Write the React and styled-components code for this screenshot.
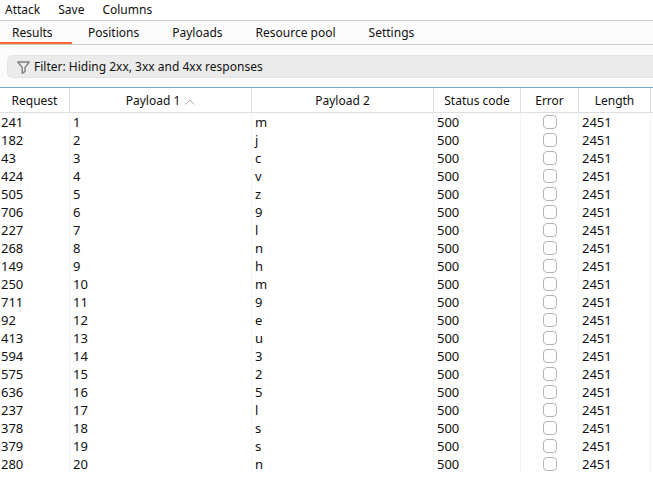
import React, { useState } from "react";
import styled, { createGlobalStyle } from "styled-components";

const GlobalStyle = createGlobalStyle`
  * { box-sizing: border-box; }
  body {
    margin: 0;
    background: #fff;
    color: #111;
    font: 12px/18px "Noto Sans", sans-serif;
  }
  button { font: inherit; color: inherit; border: 0; margin: 0; background: none; }
`;

const Window = styled.main`
  display: flex;
  flex-direction: column;
  overflow: hidden;
`;

const MenuBar = styled.nav`
  display: flex;
  align-items: flex-start;
  gap: 18px;
  height: 20px;
  padding: 1px 0 0 5px;
`;

const MenuButton = styled.button`
  padding: 0;
`;

const TabBar = styled.div`
  display: flex;
  height: 25px;
  background: #fbfbfb;
  border-top: 1px solid #c9cdcd;
  border-bottom: 1px solid #c9cdcd;
`;

const Tab = styled.button`
  padding: 2px 17px 0 16px;
  text-align: left;
  white-space: nowrap;
  border-bottom: 2px solid ${(p) => (p.$active ? "#ff6633" : "transparent")};

  &:first-child { min-width: 72px; padding-left: 12px; }
`;

const FilterPanel = styled.section`
  display: flex;
  padding: 10px 0 9px 7px;
  background: #fbfbfb;
`;

const FilterButton = styled.button`
  display: flex;
  flex: 1;
  align-items: center;
  gap: 4px;
  height: 23px;
  padding: 1px 9px 0;
  text-align: left;
  background: #ebebeb;
  border: 1px solid #e4e4e4;
  border-right: 0;
  border-radius: 6px 0 0 6px;
`;

const ResultsTable = styled.table`
  width: 100%;
  table-layout: fixed;
  border-collapse: separate;
  border-spacing: 0;
  border-top: 1px solid #7ba9d6;
`;

const Column = styled.col`
  width: ${(p) => (p.$width ? `${p.$width}px` : "auto")};
`;

const HeaderCell = styled.th`
  height: 25px;
  padding: 2px 0 0;
  font-weight: 400;
  white-space: nowrap;
  border-right: 1px solid #dedede;
  border-bottom: 1px solid #dedede;

  &:last-child { border-right: 0; }
`;

const SortArrow = styled.svg`
  margin-left: 5px;
`;

const Cell = styled.td`
  height: 18px;
  padding: 0 0 0 ${(p) => (p.$first ? "1px" : "3px")};
  font-size: 13px;
  white-space: nowrap;
  border-right: 1px solid #f4f4f4;

  &:last-child { border-right: 0; padding: 0; }
`;

const CheckWrap = styled.label`
  display: flex;
  justify-content: center;
`;

const Check = styled.input`
  appearance: none;
  width: 14px;
  height: 14px;
  margin: 0;
  background: #fff;
  border: 1px solid #b4b4b4;
  border-radius: 4px;

  &:checked { background: #ff6633; }
`;

const columns = [
  { name: "Request", width: 70 },
  { name: "Payload 1", sorted: true },
  { name: "Payload 2" },
  { name: "Status code", width: 87 },
  { name: "Error", width: 58 },
  { name: "Length", width: 72 },
];

const results = [
  [241, "m"], [182, "j"], [43, "c"], [424, "v"], [505, "z"],
  [706, "9"], [227, "l"], [268, "n"], [149, "h"], [250, "m"],
  [711, "9"], [92, "e"], [413, "u"], [594, "3"], [575, "2"],
  [636, "5"], [237, "l"], [378, "s"], [379, "s"], [280, "n"],
];

const tabs = ["Results", "Positions", "Payloads", "Resource pool", "Settings"];

export default function App() {
  const [active, setActive] = useState("Results");
  return (
    <Window>
      <GlobalStyle />
      <MenuBar>
        {["Attack", "Save", "Columns"].map((name) => (
          <MenuButton key={name} type="button">{name}</MenuButton>
        ))}
      </MenuBar>
      <TabBar role="tablist">
        {tabs.map((name) => (
          <Tab
            key={name}
            type="button"
            role="tab"
            aria-selected={active === name}
            $active={active === name}
            onClick={() => setActive(name)}
          >
            {name}
          </Tab>
        ))}
      </TabBar>
      <FilterPanel>
        <FilterButton type="button">
          <svg width="13" height="13" viewBox="0 0 13 13" fill="none" stroke="#808080" strokeWidth="1.4" strokeLinejoin="round" aria-hidden="true">
            <path d="M.8 1h11.4L8 6.6v4.1l-2.7 1.5V6.6z" />
          </svg>
          Filter: Hiding 2xx, 3xx and 4xx responses
        </FilterButton>
      </FilterPanel>
      <ResultsTable>
        <colgroup>
          {columns.map((c) => <Column key={c.name} $width={c.width} />)}
          <Column $width={2} />
        </colgroup>
        <thead>
          <tr>
            {columns.map((c) => (
              <HeaderCell key={c.name} scope="col" aria-sort={c.sorted ? "ascending" : undefined}>
                {c.name}
                {c.sorted && (
                  <SortArrow width="10" height="6" viewBox="0 0 10 6" fill="none" stroke="#aaa" aria-hidden="true">
                    <path d="M.5 5.5 5 1l4.5 4.5" />
                  </SortArrow>
                )}
              </HeaderCell>
            ))}
            <HeaderCell as="td" />
          </tr>
        </thead>
        <tbody>
          {results.map(([request, letter], i) => (
            <tr key={request}>
              <Cell $first>{request}</Cell>
              <Cell>{i + 1}</Cell>
              <Cell>{letter}</Cell>
              <Cell>500</Cell>
              <Cell $first>
                <CheckWrap>
                  <Check type="checkbox" aria-label={`Error for request ${request}`} />
                </CheckWrap>
              </Cell>
              <Cell>2451</Cell>
              <Cell />
            </tr>
          ))}
        </tbody>
      </ResultsTable>
    </Window>
  );
}
